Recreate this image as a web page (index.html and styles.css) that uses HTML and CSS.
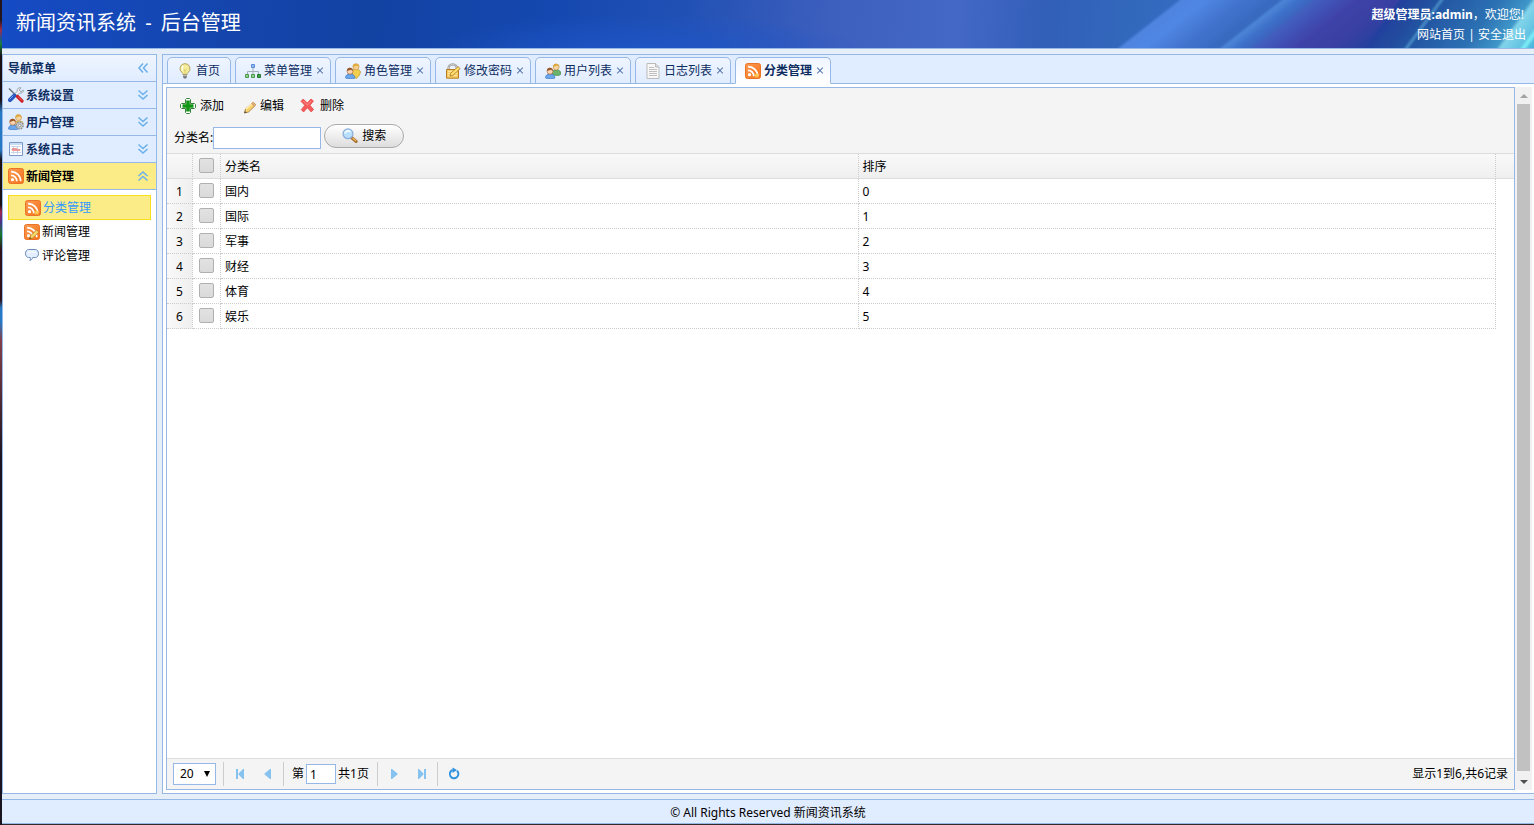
FILE: index.html
```html
<!DOCTYPE html>
<html lang="zh-CN">
<head>
<meta charset="utf-8">
<title>新闻资讯系统 - 后台管理</title>
<link rel="stylesheet" href="styles.css">
</head>
<body>
<svg class="defs" aria-hidden="true">
  <defs>
    <linearGradient id="g-rss" x1="0" y1="0" x2="1" y2="1"><stop offset="0" stop-color="#fb9a52"/><stop offset="1" stop-color="#f5731c"/></linearGradient>
    <linearGradient id="g-beam"><stop offset="0" stop-color="#4f84df"/><stop offset=".25" stop-color="#5087e4"/><stop offset=".6" stop-color="#4173cd"/><stop offset="1" stop-color="#3568bd"/></linearGradient>
    <linearGradient id="g-beam2"><stop offset="0" stop-color="#4f88da"/><stop offset=".5" stop-color="#3d70c8"/><stop offset="1" stop-color="#3d62bd"/></linearGradient>
    <linearGradient id="g-violet"><stop offset="0" stop-color="#4360bf"/><stop offset=".35" stop-color="#3f43a9"/><stop offset=".65" stop-color="#3940a3"/><stop offset="1" stop-color="#233f9e"/></linearGradient>
    <linearGradient id="g-teal"><stop offset="0" stop-color="#233f9e"/><stop offset=".3" stop-color="#21509f"/><stop offset="1" stop-color="#2d72b4"/></linearGradient>
    <linearGradient id="g-cyan"><stop offset="0" stop-color="#2d72b4"/><stop offset=".45" stop-color="#3f98c9"/><stop offset=".5" stop-color="#84d5ea"/><stop offset="1" stop-color="#46b4dc"/></linearGradient>
    <filter id="soft"><feGaussianBlur stdDeviation="0.8"/></filter>
  </defs>
  <symbol id="i-bulb" viewBox="0 0 16 16"><path d="M8 .6a5 5 0 0 0-3 9c1 .8 1 1.600 1 2.400h4c0-.8 0-1.600 1-2.400a5 5 0 0 0-3-9z" fill="#f4ec98" stroke="#b3a56a"/><path d="M6.300 3.200c-1.300 1-1.500 3-.5 4.300" stroke="#fffde8" stroke-width="1.600" fill="none"/><path d="M8 11V7M6.500 6L8 7.500 9.500 6" stroke="#d5bd55" stroke-width=".7" fill="none"/><path d="M6 11.500h4v2.500l-1 1.500H7L6 14z" fill="#777"/><path d="M6 12.700h4" stroke="#ddd" stroke-width=".8"/></symbol>
  <symbol id="i-tree" viewBox="0 0 16 16"><path d="M8 5v3M2.500 11V8.500h11V11M8 8v3" fill="none" stroke="#a3adb9"/><path d="M6.500 1.500h3v3h-3z" fill="#8fb9f1" stroke="#5c8dd6"/><path d="M.5 11.500h3v3h-3zM6.500 11.500h3v3h-3z" fill="#8ed486" stroke="#4d984a"/><path d="M12.500 11.500h3v3h-3z" fill="#3fa447" stroke="#26792e"/></symbol>
  <symbol id="i-users" viewBox="0 0 16 16"><path d="M7.500 12V8.500c0-2 7.500-2.500 8 .5v2.500l-2 1z" fill="#6bb36b" stroke="#40854b" stroke-width=".7"/><circle cx="11.200" cy="4" r="3" fill="#f8d3a2" stroke="#bd8b35" stroke-width=".6"/><path d="M8.200 4c-.5-4.500 6-4.500 6 0l-2-1.500z" fill="#dca839"/><path d="M.6 15c-.6-5 9-6 9.400 0-2 1-7.500 1-9.400 0z" fill="#6ca7eb" stroke="#3c78c3" stroke-width=".7"/><circle cx="5" cy="8.200" r="3" fill="#fad5b2" stroke="#a36036" stroke-width=".6"/><path d="M2 8c-.5-4.500 6-4.500 6 0L6 6.700z" fill="#9a5529"/></symbol>
  <symbol id="i-roles" viewBox="0 0 16 16"><path d="M7.500 14V7.500c2-2 7.500-1.500 8 1.500l-1 3-3 3.400z" fill="#f2d04d" stroke="#c0902b" stroke-width=".7"/><circle cx="11" cy="3.800" r="3.100" fill="#f8d08e" stroke="#c28a34" stroke-width=".6"/><path d="M8 4c-.5-4.500 6-4.500 6 0l-2-1.500z" fill="#e0ab39"/><path d="M.6 15c-.6-5 9-6 9.400 0-2 1-7.500 1-9.400 0z" fill="#6ca7eb" stroke="#3c78c3" stroke-width=".7"/><circle cx="5" cy="8.200" r="3" fill="#fad5b2" stroke="#a36036" stroke-width=".6"/><path d="M2 8c-.5-4.500 6-4.500 6 0L6 6.700z" fill="#9a5529"/></symbol>
  <symbol id="i-usergear" viewBox="0 0 16 16"><path d="M7.500 12V8c0-2 7.500-2 8 1v2z" fill="#d8b765"/><circle cx="10.500" cy="3.600" r="3" fill="#f8d3a2" stroke="#bd8b35" stroke-width=".6"/><path d="M7.500 3.800c-.5-4.500 6-4.500 6 0l-2-1.500z" fill="#dca839"/><path d="M.6 15c-.6-5 9-6 9.400 0-2 1-7.500 1-9.400 0z" fill="#6ca7eb" stroke="#3c78c3" stroke-width=".7"/><circle cx="4.700" cy="8.200" r="3" fill="#fad5b2" stroke="#a36036" stroke-width=".6"/><path d="M1.700 8c-.5-4.500 6-4.500 6 0l-2-1.300z" fill="#9a5529"/><circle cx="11.700" cy="11.500" r="3.400" fill="#c9ced2" stroke="#8b9297" stroke-width="1.500" stroke-dasharray="1.600 1"/><circle cx="11.700" cy="11.500" r="1.200" fill="#fff" stroke="#777" stroke-width=".7"/></symbol>
  <symbol id="i-tools" viewBox="0 0 16 16"><path d="M1 1.500l9 9" stroke="#66717c" stroke-width="1.400"/><path d="M15.300 3l-2.300 1.800-1.800-1.600L13 .8c-2.500-.6-4.300 1-3.700 3.300L6.500 7l2 2 3-3c2 .7 4.200-.8 3.800-3z" fill="#edf0f2" stroke="#8a949c" stroke-width=".8"/><path d="M6.500 8.500L2 13" stroke="#2456be" stroke-width="4" stroke-linecap="round"/><path d="M5.500 8.500L1.500 12.500" stroke="#76a4ef" stroke-width="1"/><path d="M9.500 9.500l4.500 4.500" stroke="#cc1e24" stroke-width="3.200" stroke-linecap="round"/><path d="M10 9.500l4 4" stroke="#f57d7d" stroke-width=".8"/></symbol>
  <symbol id="i-log" viewBox="0 0 16 16"><path d="M1.500 1.500h13v13h-13z" fill="#fff" stroke="#7998c7"/><path d="M2 2h12v2H2z" fill="#c8dcf6"/><path d="M3 5.500h10M3 8.500h10M3 11.500h10M5.500 5v8M9.500 5v8" stroke="#bccce4" stroke-width=".8"/><path d="M4 7h5v3H4zM9 8h3v2H9z" fill="#f08b8b" opacity=".85"/></symbol>
  <symbol id="i-rss" viewBox="0 0 16 16"><rect x=".5" y=".5" width="15" height="15" rx="2" fill="url(#g-rss)" stroke="#ec7427"/><circle cx="4.500" cy="11.700" r="1.600" fill="#fff"/><path d="M3 7.300a5.700 5.700 0 0 1 5.800 6M3 3.600a9.600 9.600 0 0 1 9.700 9.700" stroke="#fff" stroke-width="1.700" fill="none"/></symbol>
  <symbol id="i-rssstar" viewBox="0 0 16 16"><use href="#i-rss"/><path d="M11.700 9.500l.8 1.700 2 .3-1.500 1.400.4 2-1.700-1-1.800 1 .4-2-1.500-1.400 2-.3z" fill="#ffc94e"/></symbol>
  <symbol id="i-rssedit" viewBox="0 0 16 16"><use href="#i-rss"/><path d="M5.500 15l1-3.200L12.600 6l2.200 2.200L8.700 14z" fill="#f8d763" stroke="#a77a2b" stroke-width=".7"/><path d="M5.500 15l.6-1.700 1.100 1z" fill="#333"/></symbol>
  <symbol id="i-lock" viewBox="0 0 16 16"><path d="M3.500 7V5.500a4.200 4.200 0 0 1 8.400 0V7" fill="none" stroke="#999" stroke-width="2.300"/><path d="M3.500 7V5.500a4.200 4.200 0 0 1 8.400 0V7" fill="none" stroke="#ddd" stroke-width=".8"/><path d="M1.500 6.500h12v8.700h-12z" fill="#f8cb62" stroke="#b77d20"/><path d="M3 8.500h9M3 10.500h9M3 12.500h9" stroke="#ffe7a0"/><path d="M5 13l.7-2.700L13 3.600l2.200 2-7.300 6.800z" fill="#ffe06d" stroke="#ad7120" stroke-width=".8"/></symbol>
  <symbol id="i-page" viewBox="0 0 16 16"><path d="M2 .5h8.500L14 4v11.500H2z" fill="#f8f8f8" stroke="#bbb"/><path d="M10.500.5V4H14" fill="#ddd" stroke="#bbb"/><path d="M4 4.500h5M4 6.500h8M4 8.500h8M4 10.500h8M4 12.500h8" stroke="#c0c0c0"/></symbol>
  <symbol id="i-comment" viewBox="0 0 16 16"><path d="M4.500 1.500h7c4 0 4 8 0 8H8.800c-.4 1.600-1.500 2.500-3 3 .7-1 .8-2 .5-3H4.500c-4 0-4-8 0-8z" fill="#e3effe" stroke="#6b8bbb"/><path d="M4 4.500c2-1 5-1 7 0" stroke="#fff" fill="none"/></symbol>
  <symbol id="i-add" viewBox="0 0 16 16"><path d="M5.500 1.500l1-1h3l1 1v4h4l1 1v3l-1 1h-4v4l-1 1h-3l-1-1v-4h-4l-1-1v-3l1-1h4z" fill="#fff" stroke="#36803b" stroke-linejoin="round"/><path d="M6.200 2.500h3.600v3.700h3.700v3.600H9.800v3.700H6.200V9.800H2.500V6.200h3.700z" fill="#129516"/></symbol>
  <symbol id="i-edit" viewBox="0 0 16 16"><path d="M4.500 15l1-4 7-6.200c1-.8 3.700 1.700 2.700 2.700L8.500 14z" fill="#f9d36b" stroke="#a87b3e" stroke-width=".9"/><path d="M6 11l6-5.300" stroke="#fff1b7" stroke-width="1.300"/><path d="M12 5.300l2.600 2.600" stroke="#db9c76" stroke-width="1.400"/><path d="M4.300 15.200l.6-2.200 1.700 1.500z" fill="#444"/></symbol>
  <symbol id="i-del" viewBox="0 0 16 16"><path d="M1 3.300l2.200-2.200L7.300 5 11 1l2.400 2L10 7.300l3.500 4.300-2.300 2.300-3.900-4.200L3.600 14l-2.300-2.300 3.500-4.400z" fill="#f75c5c" stroke="#e34444" stroke-width=".8"/><path d="M3.500 3l4 4L11 3" stroke="#ff8f8a" fill="none"/></symbol>
  <symbol id="i-search" viewBox="0 0 16 16"><path d="M9.500 9.500l4.600 4" stroke="#a66d2c" stroke-width="3" stroke-linecap="round"/><path d="M10.500 10l3.500 3" stroke="#efbc61" stroke-width="1.300"/><circle cx="6" cy="5.800" r="4.900" fill="#b8e0fd" stroke="#8caed8" stroke-width="1.300"/><path d="M3 5.500c.5-3 4.500-3.500 5.500-1.500" stroke="#f0faff" stroke-width="1.700" fill="none"/></symbol>
  <symbol id="i-chev" viewBox="0 0 16 16"><path d="M3.500 3.500L8 7.500l4.500-4M3.500 8L8 12l4.500-4" fill="none" stroke="#69b0e8" stroke-width="1.500"/></symbol>
  <symbol id="i-first" viewBox="0 0 16 16"><path d="M4 3h2v10H4zM12 3v10h-1L6.500 8.500v-1L11 3z" fill="#86c2ef"/></symbol>
  <symbol id="i-prev" viewBox="0 0 16 16"><path d="M11 3v10h-1L4.500 8.500v-1L10 3z" fill="#86c2ef"/></symbol>
  <symbol id="i-refresh" viewBox="0 0 16 16"><path d="M11 4.800A4.300 4.300 0 1 1 6.500 4" fill="none" stroke="#2e92de" stroke-width="1.900"/><path d="M6.500 1.500l4.500 2.500-4.500 3z" fill="#2e92de"/></symbol>
</svg>

<header class="banner">
  <svg class="beams" viewBox="0 0 434 48" preserveAspectRatio="none" aria-hidden="true">
    <g filter="url(#soft)">
      <g transform="skewX(-52)">
        <rect x="80" y="-4" width="104" height="56" fill="url(#g-beam)"/>
        <rect x="182" y="-4" width="34" height="56" fill="url(#g-beam2)"/>
        <rect x="214" y="-4" width="120" height="56" fill="url(#g-violet)"/>
      </g>
      <g transform="skewX(-36)">
        <rect x="300" y="-4" width="102" height="56" fill="url(#g-teal)"/>
        <rect x="340" y="-4" width="3" height="56" fill="#4b91cc"/>
        <rect x="400" y="-4" width="70" height="56" fill="url(#g-cyan)"/>
        <rect x="456" y="-4" width="5" height="56" fill="#7cecf4"/>
      </g>
    </g>
  </svg>
  <h1 class="brand">新闻资讯系统 <span class="dash">-</span> 后台管理</h1>
  <div class="account">
    <p class="hello"><strong>超级管理员:admin</strong>，欢迎您!</p>
    <p class="links"><a href="#">网站首页</a> | <a href="#">安全退出</a></p>
  </div>
</header>

<div class="workspace">
  <nav class="sidebar" aria-label="导航菜单">
    <div class="side-head"><span>导航菜单</span><button class="collapse" aria-label="收起"><svg class="icon turn-left"><use href="#i-chev"/></svg></button></div>
    <button class="group"><svg class="icon"><use href="#i-tools"/></svg><span>系统设置</span><svg class="icon arrow"><use href="#i-chev"/></svg></button>
    <button class="group"><svg class="icon"><use href="#i-usergear"/></svg><span>用户管理</span><svg class="icon arrow"><use href="#i-chev"/></svg></button>
    <button class="group"><svg class="icon"><use href="#i-log"/></svg><span>系统日志</span><svg class="icon arrow"><use href="#i-chev"/></svg></button>
    <button class="group open"><svg class="icon"><use href="#i-rss"/></svg><span>新闻管理</span><svg class="icon arrow turn-up"><use href="#i-chev"/></svg></button>
    <ul class="submenu">
      <li><a class="current" href="#"><svg class="icon"><use href="#i-rssstar"/></svg>分类管理</a></li>
      <li><a href="#"><svg class="icon"><use href="#i-rssedit"/></svg>新闻管理</a></li>
      <li><a href="#"><svg class="icon"><use href="#i-comment"/></svg>评论管理</a></li>
    </ul>
  </nav>

  <main class="content">
    <div class="tabs">
      <div class="tab home"><svg class="icon"><use href="#i-bulb"/></svg><span>首页</span></div>
      <div class="tab"><svg class="icon"><use href="#i-tree"/></svg><span>菜单管理</span><button class="close" aria-label="关闭"></button></div>
      <div class="tab"><svg class="icon"><use href="#i-roles"/></svg><span>角色管理</span><button class="close" aria-label="关闭"></button></div>
      <div class="tab"><svg class="icon"><use href="#i-lock"/></svg><span>修改密码</span><button class="close" aria-label="关闭"></button></div>
      <div class="tab"><svg class="icon"><use href="#i-users"/></svg><span>用户列表</span><button class="close" aria-label="关闭"></button></div>
      <div class="tab"><svg class="icon"><use href="#i-page"/></svg><span>日志列表</span><button class="close" aria-label="关闭"></button></div>
      <div class="tab active"><svg class="icon"><use href="#i-rssstar"/></svg><span>分类管理</span><button class="close" aria-label="关闭"></button></div>
    </div>
    <div class="view">
      <section class="grid">
        <div class="toolbar">
          <div class="actions">
            <button class="tool"><svg class="icon"><use href="#i-add"/></svg>添加</button>
            <button class="tool"><svg class="icon"><use href="#i-edit"/></svg>编辑</button>
            <button class="tool"><svg class="icon"><use href="#i-del"/></svg>删除</button>
          </div>
          <form class="search">
            <label for="name">分类名:</label><input class="field" id="name" type="text">
            <button class="submit" type="button"><svg class="icon"><use href="#i-search"/></svg>搜索</button>
          </form>
        </div>
        <div class="rows">
          <table class="data">
            <colgroup><col class="c-num"><col class="c-check"><col><col><col class="c-fill"></colgroup>
            <thead><tr><th></th><th class="pick"><input type="checkbox" aria-label="全选"></th><th>分类名</th><th>排序</th><th></th></tr></thead>
            <tbody>
              <tr><td class="num">1</td><td class="pick"><input type="checkbox" aria-label="国内"></td><td>国内</td><td>0</td><td></td></tr>
              <tr><td class="num">2</td><td class="pick"><input type="checkbox" aria-label="国际"></td><td>国际</td><td>1</td><td></td></tr>
              <tr><td class="num">3</td><td class="pick"><input type="checkbox" aria-label="军事"></td><td>军事</td><td>2</td><td></td></tr>
              <tr><td class="num">4</td><td class="pick"><input type="checkbox" aria-label="财经"></td><td>财经</td><td>3</td><td></td></tr>
              <tr><td class="num">5</td><td class="pick"><input type="checkbox" aria-label="体育"></td><td>体育</td><td>4</td><td></td></tr>
              <tr><td class="num">6</td><td class="pick"><input type="checkbox" aria-label="娱乐"></td><td>娱乐</td><td>5</td><td></td></tr>
            </tbody>
          </table>
        </div>
        <div class="pager">
          <div class="size"><select aria-label="每页条数"><option>20</option></select></div>
          <span class="sep"></span>
          <button class="step" aria-label="首页"><svg class="icon"><use href="#i-first"/></svg></button>
          <button class="step" aria-label="上一页"><svg class="icon"><use href="#i-prev"/></svg></button>
          <span class="sep"></span>
          <label class="goto">第<input type="text" value="1">共1页</label>
          <span class="sep"></span>
          <button class="step" aria-label="下一页"><svg class="icon flip"><use href="#i-prev"/></svg></button>
          <button class="step" aria-label="末页"><svg class="icon flip"><use href="#i-first"/></svg></button>
          <span class="sep"></span>
          <button class="step" aria-label="刷新"><svg class="icon"><use href="#i-refresh"/></svg></button>
          <span class="total">显示1到6,共6记录</span>
        </div>
      </section>
      <div class="scrollbar" aria-hidden="true"><span class="up"></span><span class="thumb"></span><span class="down"></span></div>
    </div>
  </main>
</div>
<footer class="foot">© All Rights Reserved 新闻资讯系统</footer>
</body>
</html>
```
FILE: styles.css
```css
* { box-sizing: border-box; }

html, body { height: 100%; }

body {
  margin: 0;
  padding: 0 0 1px 2px;
  display: flex;
  flex-direction: column;
  background:
    linear-gradient(#24141c 0 20px, #a02d4c 30px, #29508f 38px, #16803b 44px, #1a1014 56px, #1a1014 100px, #2679c4 112px 150px, #1a1014 160px 205px, #a0264c 212px, #4b318c 222px, #167a30 234px, #32121a 250px 300px, #2679c4 308px 322px, #82404a 340px, #1a1420 460px) 0 0 / 2px 100% no-repeat,
    #33282e;
  color: #000;
  font-family: "Noto Sans", "Noto Sans CJK SC", sans-serif;
  font-size: 12px;
  line-height: 16px;
  overflow: hidden;
}

button, input, select { font: inherit; color: inherit; margin: 0; padding: 0; }
button { border: 0; background: none; cursor: pointer; }
a { color: inherit; text-decoration: none; }
p, h1, ul { margin: 0; padding: 0; }
ul { list-style: none; }

.defs { position: absolute; width: 0; height: 0; }
.icon { width: 16px; height: 16px; flex: none; display: block; }
.turn-left { transform: rotate(90deg); }
.turn-up, .flip { transform: rotate(180deg); }

.banner {
  position: relative;
  flex: none;
  height: 49px;
  display: flex;
  justify-content: space-between;
  border-bottom: 1px solid #95b8e7;
  background:
    radial-gradient(ellipse 220px 40px at 42% 110%, #1f55c6, transparent),
    linear-gradient(97deg, #154bc5 0, #1546b0 12%, #1242a2 24%, #1548b0 36%, #2050b4 44%, #3d5fbe 54%, #4468c6 62%, #325fb8 68%, #3269bd 74%, #3b72cc 82%);
  color: #fff;
}
.beams { position: absolute; top: 0; right: 0; width: 434px; height: 48px; }
.brand { position: relative; padding: 9px 14px; font-size: 20px; line-height: 28px; font-weight: 400; }
.dash { padding: 0 4px; }
.account { position: relative; padding: 5px 8px 0 0; text-align: right; line-height: 20px; }
.hello { padding-right: 2px; }

.workspace { flex: 1; min-height: 0; display: flex; gap: 5px; padding: 5px 0; background: #e6eef8; }

.sidebar { width: 155px; flex: none; border: 1px solid #95b8e7; background: #fff; color: #0e2d5f; }
.side-head, .group {
  width: 100%;
  height: 27px;
  display: flex;
  align-items: center;
  border-bottom: 1px solid #95b8e7;
  padding: 0 5px;
  font-weight: 700;
}
.side-head span, .group span { padding-top: 2px; }
.side-head { justify-content: space-between; background: linear-gradient(#eff5ff, #e0ecff); }
.group { gap: 2px; background: #e0ecff; text-align: left; }
.group .arrow { margin-left: auto; }
.group.open { background: #fbec88; color: #000; }
.submenu { padding: 5px; color: #000; }
.submenu a { height: 24px; display: flex; align-items: center; gap: 2px; padding-left: 16px; }
.submenu .current { height: 25px; border: 1px solid #f8df1e; background: #fbec88; color: #3399ff; }

.content { flex: 1; min-width: 0; display: flex; flex-direction: column; border: 1px solid #95b8e7; border-right: 0; background: #fff; }
.tabs { flex: none; height: 29px; display: flex; align-items: flex-end; gap: 4px; padding-left: 4px; border-bottom: 1px solid #95b8e7; background: #e0ecff; color: #0e2d5f; }
.tab {
  width: 96px;
  height: 27px;
  margin-bottom: -1px;
  display: flex;
  align-items: center;
  gap: 3px;
  padding: 0 6px 0 9px;
  border: 1px solid #95b8e7;
  border-radius: 5px 5px 0 0;
  background: linear-gradient(#eff5ff, #e0ecff);
  white-space: nowrap;
}
.tab.home { width: 64px; }
.tab.active { border-bottom-color: #fff; background: linear-gradient(#eff5ff, #fff); font-weight: 700; }
.close { position: relative; width: 9px; height: 9px; flex: none; }
.close::before, .close::after { content: ""; position: absolute; left: 1px; top: 4px; width: 8px; height: 1px; background: #5876ae; transform: rotate(45deg); }
.close::after { transform: rotate(-45deg); }

.view { flex: 1; min-height: 0; display: flex; padding: 3px 2px 3px 3px; }
.grid { flex: 1; min-width: 0; display: flex; flex-direction: column; border: 1px solid #95b8e7; }

.toolbar { flex: none; padding: 4px 7px 3px; border-bottom: 1px solid #ddd; background: #f4f4f4; }
.actions { display: flex; gap: 16px; padding-left: 6px; }
.tool { display: flex; align-items: center; gap: 4px; height: 27px; }
.search { display: flex; align-items: center; padding-top: 6px; height: 31px; }
.field { width: 108px; height: 22px; border: 1px solid #95b8e7; padding: 0 4px; background: #fff; }
.submit {
  width: 80px;
  height: 24px;
  margin-left: 3px;
  margin-bottom: 4px;
  display: flex;
  align-items: center;
  justify-content: center;
  gap: 4px;
  border: 1px solid #aaa;
  border-radius: 12px;
  background: linear-gradient(#fff, #ddd);
}

.rows { flex: 1; min-height: 0; overflow: hidden; }
.data { width: 100%; table-layout: fixed; border-collapse: separate; border-spacing: 0; }
.c-num { width: 26px; }
.c-check { width: 28px; }
.c-fill { width: 18px; }
.data th, .data td { height: 25px; padding: 2px 4px 0; text-align: left; font-weight: 400; border-right: 1px dotted #ccc; border-bottom: 1px dotted #ccc; }
.data thead th { border-bottom: 1px solid #ddd; background: linear-gradient(#f9f9f9, #efefef); }
.data th:last-child, .data td:last-child { border-right: 0; }
.data td:last-child { border-bottom: 0; }
.data .num { padding: 2px 0 0; text-align: center; background: linear-gradient(90deg, #f9f9f9, #efefef); }
.data .pick { padding: 0 0 2px; text-align: center; }
.pick input { appearance: none; display: block; width: 15px; height: 15px; margin: 0 auto; border: 1px solid #b0b0b0; border-radius: 2px; background: linear-gradient(#e2e2e2, #dadada); }

.pager { flex: none; height: 31px; display: flex; align-items: center; padding: 0 6px; border-top: 1px solid #ddd; background: #f4f4f4; }
.size { position: relative; margin-right: 7px; }
.size select { appearance: none; display: block; width: 43px; height: 22px; padding-left: 6px; border: 1px solid #95b8e7; border-radius: 0; background: #fff; }
.size::after { content: ""; position: absolute; right: 6px; top: 8px; border: 3px solid transparent; border-top: 6px solid #000; border-bottom: 0; pointer-events: none; }
.sep { width: 1px; height: 24px; margin: 0 1px 0 0; background: #ccc; }
.step { width: 28px; height: 26px; display: flex; align-items: center; justify-content: center; }
.step + .sep { margin-left: 1px; }
.sep + .step { margin-left: 1px; }
.goto { display: flex; align-items: center; gap: 2px; padding: 0 8px 0 7px; }
.goto input { width: 30px; height: 20px; padding: 0 3px; border: 1px solid #95b8e7; background: #fff; }
.total { margin-left: auto; }

.scrollbar { width: 17px; flex: none; display: flex; flex-direction: column; align-items: center; justify-content: space-between; background: #f1f1f1; padding: 7px 0 6px; }
.thumb { flex: 1; width: 13px; margin: 6px 0 9px; background: #c1c1c1; }
.up { border: 4px solid transparent; border-bottom-color: #a3a3a3; border-top: 0; }
.down { border: 4px solid transparent; border-top-color: #505050; border-bottom: 0; }

.foot { flex: none; height: 25px; display: flex; align-items: center; justify-content: center; border: 1px solid #95b8e7; border-width: 1px 0; background: #e0ecff; padding-top: 2px; }
```
